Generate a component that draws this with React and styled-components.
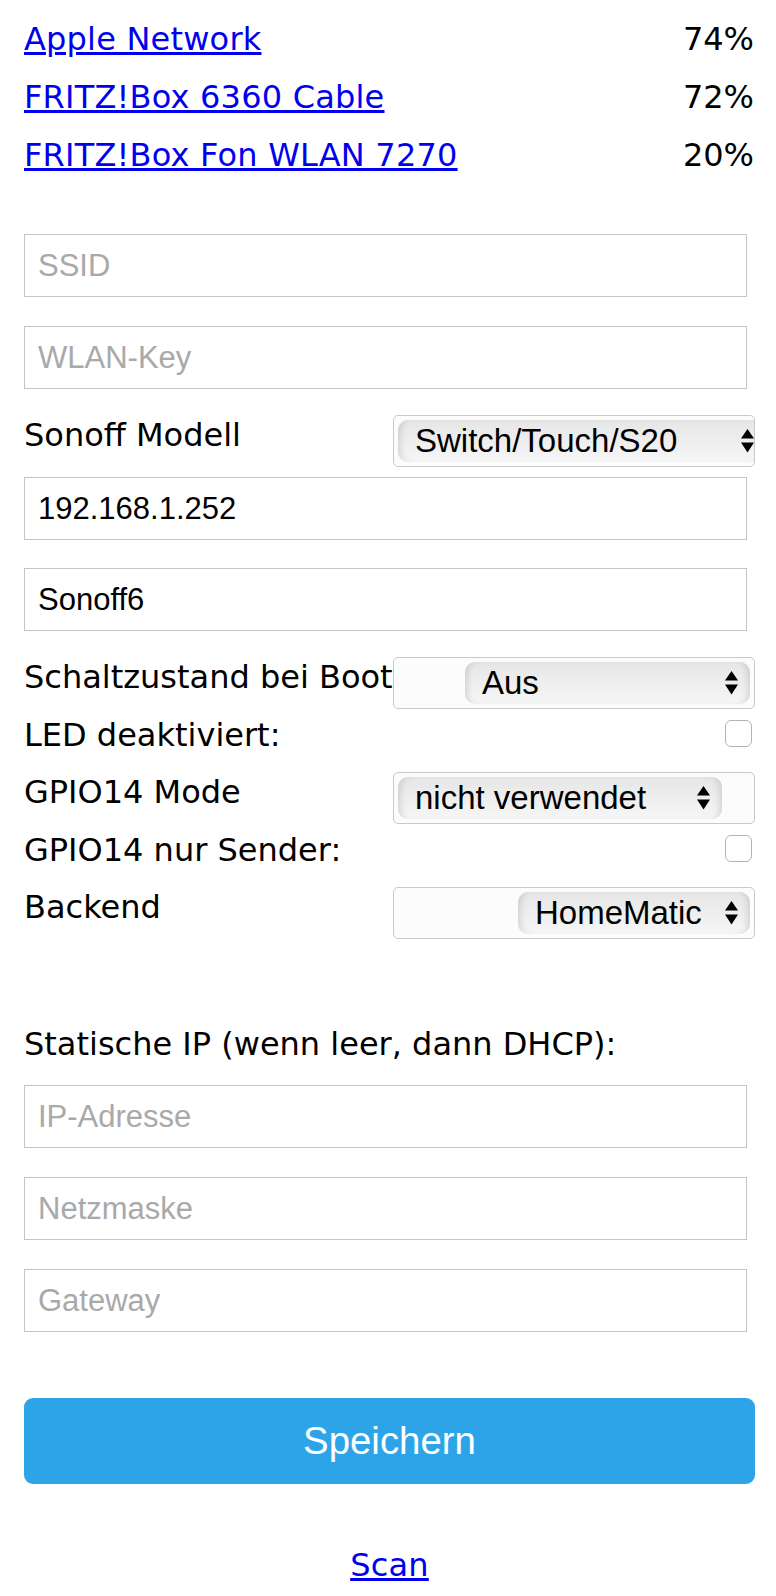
import styled, { createGlobalStyle } from "styled-components";

const GlobalStyle = createGlobalStyle`
  html, body {
    margin: 0;
    padding: 0;
    background: #fff;
  }
  body {
    font-family: "DejaVu Sans", Verdana, sans-serif;
    color: #000;
  }
`;

const networks = [
  { name: "Apple Network", quality: 74 },
  { name: "FRITZ!Box 6360 Cable", quality: 72 },
  { name: "FRITZ!Box Fon WLAN 7270", quality: 20 },
];

function Arrows() {
  return (
    <svg width="13" height="24" viewBox="0 0 13 24">
      <path d="M6.5 0 L13 9.5 L0 9.5 Z" fill="#000" />
      <path d="M0 13.5 L13 13.5 L6.5 23.5 Z" fill="#000" />
    </svg>
  );
}

function Select({ label, value, offset, width }) {
  return (
    <SelectRow>
      <Label>{label}</Label>
      <SelectBox role="listbox" aria-label={label}>
        <Pill $offset={offset} $width={width}>
          <span>{value}</span>
          <Arrows />
        </Pill>
      </SelectBox>
    </SelectRow>
  );
}

function Check({ label }) {
  return (
    <CheckRow>
      <Label>{label}</Label>
      <CheckBox type="checkbox" aria-label={label} />
    </CheckRow>
  );
}

export default function App() {
  return (
    <>
      <GlobalStyle />
      <Page>
        <NetList>
          {networks.map(({ name, quality }) => (
            <NetRow key={name}>
              <NetLink href="#">{name}</NetLink>
              <span>{quality}%</span>
            </NetRow>
          ))}
        </NetList>

        <Field $mt={50} placeholder="SSID" />
        <Field $mt={29} placeholder="WLAN-Key" />
        <Spacer $h={26} />
        <Select label="Sonoff Modell" value="Switch/Touch/S20" offset={4} width={368} />
        <Field $mt={10} defaultValue="192.168.1.252" />
        <Field $mt={28} defaultValue="Sonoff6" />
        <Spacer $h={26} />
        <Select label="Schaltzustand bei Boot" value="Aus" offset={71} width={285} />
        <Check label="LED deaktiviert:" />
        <Select label="GPIO14 Mode" value="nicht verwendet" offset={4} width={324} />
        <Check label="GPIO14 nur Sender:" />
        <Select label="Backend" value="HomeMatic" offset={124} width={232} />

        <SectionLabel>Statische IP (wenn leer, dann DHCP):</SectionLabel>
        <Field $mt={21} placeholder="IP-Adresse" />
        <Field $mt={29} placeholder="Netzmaske" />
        <Field $mt={29} placeholder="Gateway" />

        <SaveButton type="button">Speichern</SaveButton>
        <ScanLine>
          <NetLink href="#">Scan</NetLink>
        </ScanLine>
      </Page>
    </>
  );
}

const Page = styled.div`
  width: 776px;
  box-sizing: border-box;
  padding: 10px 21px 40px 24px;
  display: flex;
  flex-direction: column;
`;

const NetList = styled.div`
  display: flex;
  flex-direction: column;
`;

const NetRow = styled.div`
  height: 58px;
  display: flex;
  align-items: center;
  justify-content: space-between;
  padding-right: 1px;
  font-size: 32px;
`;

const NetLink = styled.a`
  color: #0000ee;
  text-decoration: underline;
  font-size: 32px;
  letter-spacing: 0.2px;
`;

const Spacer = styled.div`
  height: ${(p) => p.$h}px;
  flex: none;
`;

const Field = styled.input`
  margin-top: ${(p) => p.$mt || 0}px;
  width: 723px;
  height: 63px;
  box-sizing: border-box;
  border: 1px solid #c4c4c4;
  border-radius: 0;
  padding: 0 13px;
  font-family: "Liberation Sans", Arial, sans-serif;
  font-size: 31px;
  color: #000;
  background: #fff;
  outline: none;
  &::placeholder {
    color: #a9a9a9;
  }
`;

const SelectRow = styled.div`
  display: flex;
  align-items: flex-start;
  height: 52px;
`;

const Label = styled.div`
  flex: 0 0 369px;
  white-space: nowrap;
  font-size: 32px;
  line-height: 40px;
`;

const SelectBox = styled.div`
  flex: 1;
  height: 52px;
  box-sizing: border-box;
  border: 1px solid #c9c9c9;
  border-radius: 5px;
  background: #fcfcfc;
  overflow: hidden;
  display: flex;
  align-items: center;
`;

const Pill = styled.div`
  flex: none;
  margin-left: ${(p) => p.$offset}px;
  width: ${(p) => p.$width}px;
  height: 42px;
  box-sizing: border-box;
  padding: 0 12px 0 17px;
  display: flex;
  align-items: center;
  justify-content: space-between;
  border-radius: 10px;
  background: linear-gradient(to bottom, #e6e6e6 0%, #eeeeee 50%, #f6f6f6 100%);
  box-shadow: inset 7px 0 7px -5px rgba(0, 0, 0, 0.14),
    inset -7px 0 7px -5px rgba(0, 0, 0, 0.14);
  font-family: "Liberation Sans", Arial, sans-serif;
  font-size: 33px;
  white-space: nowrap;
  svg {
    flex: none;
  }
`;

const CheckRow = styled.div`
  display: flex;
  align-items: flex-start;
  justify-content: space-between;
  height: 63px;
  ${Label} {
    margin-top: 6px;
  }
`;

const CheckBox = styled.input`
  appearance: none;
  -webkit-appearance: none;
  margin: 11px 3px 0 0;
  width: 27px;
  height: 27px;
  box-sizing: border-box;
  border: 1px solid #b3b3b3;
  border-radius: 6px;
  background: #fff;
`;

const SectionLabel = styled.div`
  margin-top: 85px;
  font-size: 32px;
  line-height: 40px;
  white-space: nowrap;
`;

const SaveButton = styled.button`
  margin-top: 66px;
  width: 100%;
  height: 86px;
  border: 0;
  border-radius: 9px;
  background: #2ea4e8;
  color: #fff;
  font-family: "Liberation Sans", Arial, sans-serif;
  font-size: 38.4px;
  cursor: pointer;
`;

const ScanLine = styled.div`
  margin-top: 61px;
  text-align: center;
  line-height: 40px;
`;
